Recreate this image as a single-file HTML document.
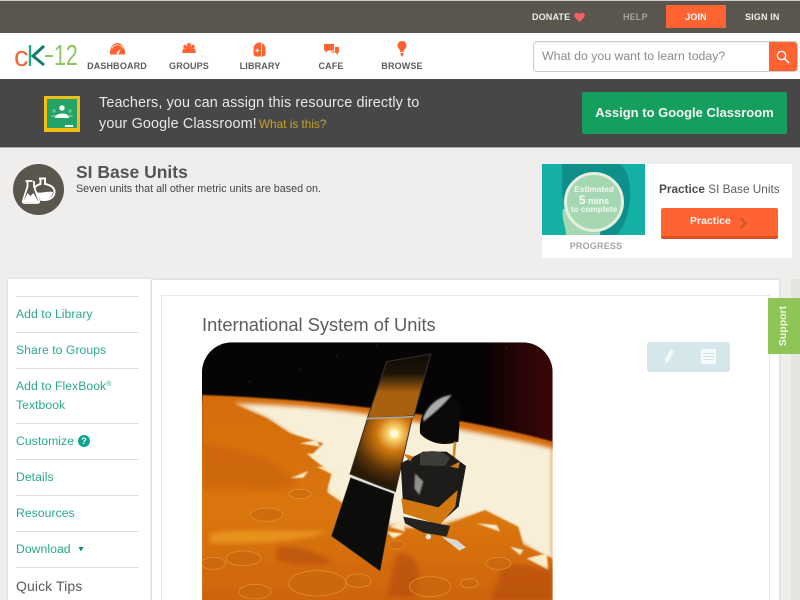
<!DOCTYPE html>
<html><head><meta charset="utf-8"><title>SI Base Units</title>
<style>
*{box-sizing:border-box}
html,body{margin:0;padding:0;width:800px;height:600px;overflow:hidden;background:#efeeec;font-family:"Liberation Sans",sans-serif}
#w{position:relative;width:800px;height:600px;overflow:hidden;background:#efeeec}
.a{position:absolute;white-space:nowrap}
.nav{font-size:9px;font-weight:700;color:#5b5b5b;letter-spacing:.15px;width:80px;text-align:center;top:61px}
.top{font-size:9px;font-weight:700;top:12px;letter-spacing:.15px}
.side{left:16px;font-size:12.200px;color:#2aa98f;letter-spacing:.05px}
.ln{left:16px;width:123px;height:1px;background:#dfdfdc}
</style></head><body><div id="w">
<div class="a" style="left:0;top:0;width:800px;height:33px;background:#5a564e;border-top:1px solid #ccc"></div>
<div class="a" style="left:0;top:33px;width:800px;height:46px;background:#fff"></div>
<div class="a" style="left:0;top:79px;width:800px;height:69px;background:#474747;border-bottom:1px solid #aaa"></div>

<div class="a top" style="left:532px;color:#eee">DONATE</div>
<svg class="a" style="left:574px;top:12px" width="11" height="10" viewBox="0 0 11 10"><path d="M5.5 10L1 5.500C-.5 3.500.5 .8 3 .8c1.200 0 2 .6 2.500 1.500C6 1.400 6.800.8 8 .8c2.500 0 3.500 2.700 2 4.700z" fill="#f0625f"/></svg>
<div class="a top" style="left:623px;color:#a5a29b">HELP</div>
<div class="a" style="left:666px;top:5px;width:60px;height:23px;background:#ff6332;border-radius:1px"></div>
<div class="a top" style="left:666px;width:60px;text-align:center;color:#fff">JOIN</div>
<div class="a top" style="left:745px;color:#eee">SIGN IN</div>

<div class="a" style="left:14px;top:39px;font-size:29px;line-height:36px;color:#ee6a3a">c</div>
<svg class="a" style="left:27px;top:44px" width="20" height="24" viewBox="0 0 20 24"><path d="M3 1v21" stroke="#26a98b" stroke-width="2.400" fill="none"/><path d="M17 2L6 12l11 9" stroke="#127d68" stroke-width="3" fill="none"/></svg>
<div class="a" style="left:45px;top:55px;width:8px;height:2px;background:#8cc665"></div>
<div class="a" style="left:54px;top:38px;font-size:29px;line-height:36px;color:#8cc665;transform:scaleX(.74);transform-origin:0 0">12</div>

<svg class="a" style="left:110px;top:43px" width="15" height="12" viewBox="0 0 15 12"><path d="M0 11.500C-.5 5 3 0 7.500 0S15.500 5 15 11.500z" fill="#ff6332"/><path d="M1.800 5.500C3 3 5 1.800 7.500 1.800S12 3 13.200 5.500" fill="none" stroke="#fff" stroke-width=".7"/><path d="M6 10.500L10.500 6 8.500 11z" fill="#fff"/></svg>
<div class="a nav" style="left:77px">DASHBOARD</div>
<svg class="a" style="left:182px;top:43px" width="14" height="11" viewBox="0 0 14 11" fill="#ff6332"><circle cx="3" cy="3.500" r="1.700"/><circle cx="7" cy="2" r="2"/><circle cx="11" cy="3.500" r="1.700"/><path d="M0 10l1.200-4.500h2L4 3.500h6l.8 2h2L14 10z"/></svg>
<div class="a nav" style="left:149px">GROUPS</div>
<svg class="a" style="left:253px;top:42px" width="13" height="15" viewBox="0 0 13 15"><path d="M.5 7C.5 3 3.500.5 6.500.5S12.500 3 12.500 7v5c0 1.500-1.500 2.500-3 2.500H3.500C2 14.500.5 13.500.5 12z" fill="#ff6332"/><path d="M8.500 1.500v12.500" stroke="#fff" stroke-width=".8"/><path d="M2.500 8.500h3.500M4.200 6.500v4" stroke="#fff"/></svg>
<div class="a nav" style="left:220px">LIBRARY</div>
<svg class="a" style="left:324px;top:44px" width="15" height="12" viewBox="0 0 15 12" fill="#ff6332"><path d="M0 0h10v6.500H4L1.500 9V6.500H0z"/><path d="M11 3h4v5.500h-1V11l-2.500-2.500H7V7.500h4z"/></svg>
<div class="a nav" style="left:291px">CAFE</div>
<svg class="a" style="left:397px;top:41px" width="10" height="16" viewBox="0 0 10 16" fill="#ff6332"><path d="M5 0c2.800 0 4.500 2 4.500 4.500C9.500 7 7 8 6.500 11h-3C3 8 .5 7 .5 4.500.5 2 2.200 0 5 0z"/><path d="M3.500 12h3v1.500l-1 2h-1l-1-2z"/></svg>
<div class="a nav" style="left:362px">BROWSE</div>

<div class="a" style="left:533px;top:41px;width:265px;height:31px;background:#fff;border:1px solid #cfccc4;border-radius:4px;box-shadow:inset 0 1px 2px #eee"></div>
<div class="a" style="left:542px;top:49px;font-size:12.300px;line-height:15px;color:#8b8b8b">What do you want to learn today?</div>
<div class="a" style="left:769px;top:42px;width:28px;height:29px;background:#ff6332;border-radius:0 3px 3px 0"></div>
<svg class="a" style="left:775px;top:50px" width="16" height="14" viewBox="0 0 16 14"><circle cx="6.500" cy="5.500" r="4.200" fill="none" stroke="#fff" stroke-width="1.300"/><path d="M9.500 8.500L14 13" stroke="#fff" stroke-width="1.600"/></svg>

<svg class="a" style="left:44px;top:96px" width="36" height="36" viewBox="0 0 36 36"><rect width="36" height="36" fill="#f4bc16"/><rect x="3" y="3" width="30" height="29" fill="#21a465"/><circle cx="18" cy="12" r="2.700" fill="#fff"/><circle cx="10" cy="15" r="1.700" fill="#6cc296"/><circle cx="26" cy="15" r="1.700" fill="#6cc296"/><path d="M7 21c0-3 6-3 6 0zM23 21c0-3 6-3 6 0z" fill="#6cc296"/><path d="M11 22c0-6 14-6 14 0z" fill="#fff"/><rect x="21" y="29" width="8" height="2" fill="#fff"/></svg>
<div class="a" style="left:99px;top:93px;font-size:14.400px;line-height:20.500px;color:#e8e8e8;letter-spacing:.12px">Teachers, you can assign this resource directly to<br>your Google Classroom! <span style="font-size:11.800px;color:#c9a227;letter-spacing:0;margin-left:-2px">What is this?</span></div>
<div class="a" style="left:582px;top:92px;width:205px;height:42px;background:#169e5e;border-radius:2px;color:#f3f3f3;font-weight:700;font-size:13px;line-height:42px;text-align:center">Assign to Google Classroom</div>

<div class="a" style="left:13px;top:164px;width:51px;height:51px;border-radius:50%;background:#5a564e"></div>
<svg class="a" style="left:22px;top:176px;overflow:visible" width="34" height="29" viewBox="0 0 34 29"><g transform="translate(3 2)"><path d="M14 .5h7M15.500 1v5C10 7.500 8 11 9 15c1 5 5 7 10 7 6 0 10-3 10.500-7.500C30 10 26 7 20 6V1" fill="none" stroke="#fff" stroke-width="2"/><path d="M11 14c5 2 9-1 17 0-1 5-4 7-9 7s-7-3-8-7z" fill="#fff"/></g><path d="M3 4h8v6l7 14c1 2 0 4-2 4H2c-2 0-2.500-2-1.500-4L6 10V5z" fill="#5a564e"/><path d="M3.500 5h7M5.500 5v5.500L1 24.500c-.5 1.500 0 2.500 1.500 2.500h13c1.500 0 2-1 1.500-2.500l-5-14V5" fill="none" stroke="#fff" stroke-width="1.800"/><path d="M1.500 26l4-9 3 3 3-3 5 9z" fill="#fff"/></svg>
<div class="a" style="left:76px;top:162px;font-size:17.500px;line-height:21px;font-weight:700;color:#545454">SI Base Units</div>
<div class="a" style="left:76px;top:182.500px;font-size:10.750px;line-height:13px;color:#454545">Seven units that all other metric units are based on.</div>

<div class="a" style="left:542px;top:164px;width:250px;height:94px;background:#fff"></div>
<svg class="a" style="left:542px;top:164px" width="103" height="71" viewBox="0 0 103 71"><rect width="103" height="71" fill="#14b0a5"/><path d="M20 0H78C92 10 92 50 75 71H30L20 30z" fill="#0e8f8c"/><path d="M24 71C24 62 19 55 21 45L60 50 58 71z" fill="#a5d8b2"/><circle cx="52" cy="38" r="28.500" fill="#a5d8b2" stroke="#e4efdf" stroke-width="3"/></svg>
<div class="a" style="left:564px;top:184px;width:60px;text-align:center;font-size:8.300px;line-height:10px;font-weight:700;color:#f2f7ef">Estimated</div>
<div class="a" style="left:564px;top:193.500px;width:60px;text-align:center;font-size:9px;line-height:12px;font-weight:700;color:#f7faf5"><span style="font-size:12px">5</span> mins</div>
<div class="a" style="left:564px;top:204px;width:60px;text-align:center;font-size:8.300px;line-height:11px;font-weight:700;color:#f2f7ef">to complete</div>
<div class="a" style="left:542px;top:241px;width:108px;text-align:center;font-size:9px;line-height:11px;font-weight:700;color:#a5a5a5;letter-spacing:.2px">PROGRESS</div>
<div class="a" style="left:659px;top:182px;font-size:11.800px;line-height:15px;color:#5c5c5c"><b style="color:#4c4c4c">Practice</b> SI Base Units</div>
<div class="a" style="left:661px;top:208px;width:117px;height:31px;background:#ff6332;border-bottom:3px solid #dd4e1f;border-radius:2px"></div>
<div class="a" style="left:690px;top:214px;font-size:10.500px;line-height:14px;font-weight:700;color:#fdf3ee">Practice</div>
<svg class="a" style="left:739px;top:217px" width="9" height="12" viewBox="0 0 9 12"><path d="M1.500 1L6.500 6 1.500 11" fill="none" stroke="#d35a2a" stroke-width="2.800"/></svg>

<div class="a" style="left:8px;top:279px;width:143px;height:330px;background:#fff;box-shadow:0 0 2px #ccc"></div>
<div class="a" style="left:152px;top:280px;width:627px;height:330px;background:#fff;box-shadow:0 0 3px #c8c8c8"></div>
<div class="a" style="left:161px;top:295px;width:609px;height:320px;background:#fff;border:1px solid #e7e7e5"></div>

<div class="a ln" style="top:296px"></div>
<div class="a side" style="top:307px">Add to Library</div>
<div class="a ln" style="top:332px"></div>
<div class="a side" style="top:343px">Share to Groups</div>
<div class="a ln" style="top:368px"></div>
<div class="a side" style="top:379px">Add to FlexBook<sup style="font-size:7px;line-height:0;vertical-align:4px">®</sup></div>
<div class="a side" style="top:398px">Textbook</div>
<div class="a ln" style="top:423px"></div>
<div class="a side" style="top:434px">Customize</div>
<div class="a" style="left:78px;top:435px;width:12px;height:12px;border-radius:50%;background:#0ea491;color:#fff;font-size:9px;line-height:12px;font-weight:700;text-align:center">?</div>
<div class="a ln" style="top:459px"></div>
<div class="a side" style="top:470px">Details</div>
<div class="a ln" style="top:495px"></div>
<div class="a side" style="top:506px">Resources</div>
<div class="a ln" style="top:531px"></div>
<div class="a side" style="top:542px">Download</div>
<svg class="a" style="left:78px;top:546px" width="6" height="6" viewBox="0 0 6 6"><path d="M.5 1h5L3 5.500z" fill="#158a78"/></svg>
<div class="a ln" style="top:567px"></div>
<div class="a" style="left:16px;top:578px;font-size:14px;color:#5a5a5a;letter-spacing:.1px">Quick Tips</div>

<div class="a" style="left:202px;top:314px;font-size:18.300px;line-height:22px;color:#5d5d5d">International System of Units</div>

<svg class="a" style="left:190px;top:310px" width="380" height="290" viewBox="0 0 1140 870">
<defs>
<clipPath id="c"><rect x="36" y="97" width="1052" height="900" rx="90"/></clipPath>
<filter id="b" x="-20%" y="-20%" width="140%" height="140%"><feGaussianBlur stdDeviation="7"/></filter>
<filter id="s" x="-10%" y="-10%" width="120%" height="120%"><feGaussianBlur stdDeviation="2"/></filter>
<radialGradient id="g" gradientUnits="userSpaceOnUse" cx="613" cy="371" r="150"><stop offset="0" stop-color="#fff"/><stop offset=".1" stop-color="#ffdf80"/><stop offset=".35" stop-color="#d0780e"/><stop offset=".75" stop-color="#5a3208"/><stop offset="1" stop-color="#2a1a08"/></radialGradient>
<linearGradient id="t" x1="0" x2="0" y1="0" y2="1"><stop offset="0" stop-color="#0f0b07"/><stop offset=".3" stop-color="#1c1208"/><stop offset=".6" stop-color="#a8620f"/><stop offset="1" stop-color="#a8620f"/></linearGradient>
<linearGradient id="sky" x1="0" x2="1" y1="0" y2="0"><stop offset="0" stop-color="#050507"/><stop offset=".8" stop-color="#060304"/><stop offset=".92" stop-color="#2a0505"/><stop offset="1" stop-color="#3a0606"/></linearGradient>
<linearGradient id="ter" x1="0" x2="0" y1="0" y2="1"><stop offset="0" stop-color="#d56d0d"/><stop offset=".55" stop-color="#da7510"/><stop offset="1" stop-color="#cc620c"/></linearGradient>
</defs>
<g clip-path="url(#c)">
<rect x="36" y="97" width="1052" height="320" fill="url(#sky)"/>
<g fill="#778" opacity=".7"><circle cx="180" cy="215" r="1.500"/><circle cx="330" cy="180" r="1.500"/><circle cx="560" cy="108" r="1.500"/><circle cx="870" cy="240" r="1.500"/><circle cx="950" cy="115" r="1.500"/><circle cx="440" cy="140" r="1.500"/></g>
<path d="M36 255C250 262 500 285 700 315C850 338 1000 370 1088 395V900H36z" fill="#d56d0d" filter="url(#s)"/>
<path d="M130 280C300 285 450 298 540 315C700 338 900 370 1088 415V760L980 690 880 610 700 660 560 640 420 560 340 400 230 325z" fill="#f8efd8" filter="url(#b)"/>
<path d="M36 282L130 282 230 325 300 370 400 400 360 440 425 490 410 545 470 590 600 660 760 650 885 600 985 650 1000 705 1088 745V900H36z" fill="url(#ter)" filter="url(#s)"/>
<g fill="#f9ecc8" filter="url(#s)"><path d="M300 505l55-22-15 20zM350 430l50 5-25 15zM380 470l70 5-20 20zM410 545l35-5 10 30zM600 650l40-15 5 30zM860 640l60 5 10 20zM960 710l40 10-10 15zM1010 745l60-15 5 50zM330 400l50-10 10 20zM590 665l50 5-30 15z"/></g>
<path d="M36 400C150 420 260 440 320 520 260 560 120 520 36 540z" fill="#c9620c" opacity=".6" filter="url(#b)"/>
<path d="M60 670C200 650 300 670 420 660 340 700 180 700 60 700z" fill="#f0a028" opacity=".7" filter="url(#b)"/>
<path d="M260 710C340 700 400 740 430 760 350 770 300 760 260 750zM620 730C680 720 700 790 680 860H590zM940 770C1000 750 1060 790 1088 770V870H900z" fill="#a8400a" opacity=".45" filter="url(#b)"/>
<g fill="#c9650f" fill-opacity=".6" stroke="#e9983a" stroke-opacity=".75" stroke-width="2.500"><ellipse cx="230" cy="614" rx="48" ry="20"/><ellipse cx="382" cy="820" rx="86" ry="38"/><ellipse cx="160" cy="745" rx="52" ry="22"/><ellipse cx="195" cy="845" rx="48" ry="22"/><ellipse cx="505" cy="812" rx="38" ry="20"/><ellipse cx="70" cy="760" rx="36" ry="18"/><ellipse cx="925" cy="760" rx="38" ry="18"/><ellipse cx="838" cy="820" rx="26" ry="14"/><ellipse cx="330" cy="552" rx="32" ry="14"/><ellipse cx="720" cy="830" rx="62" ry="30"/><ellipse cx="620" cy="705" rx="24" ry="13"/></g>
<path d="M590 155L722 132 672 318 532 325z" fill="url(#t)" stroke="#34322c" stroke-width="3"/>
<path d="M532 326L668 318 616 546 480 492z" fill="url(#g)" stroke="#34322c" stroke-width="3"/>
<circle cx="613" cy="371" r="12" fill="#fffbe0" filter="url(#s)"/>
<path d="M482 504L612 552 570 782 425 678z" fill="#0c0c0b" stroke="#2a2a26" stroke-width="2"/>
<path d="M482 500L616 548" stroke="#ddd" stroke-width="4"/>
<path d="M530 326L670 320" stroke="#a8a89c" stroke-width="5"/>
<path d="M775 250C720 255 685 310 690 370 715 400 765 410 805 395L812 280z" fill="#0b0a09"/>
<path d="M700 322C720 275 755 258 785 255 765 280 745 300 700 335z" fill="#a9acac" filter="url(#s)"/>
<path d="M795 395L790 460" stroke="#d08a20" stroke-width="8"/>
<path d="M632 460L700 425 770 425 828 468 806 590 745 645 640 600z" fill="#1d1c1a"/>
<path d="M690 432c30-15 70-10 90 12l-15 24-75-2z" fill="#3c3c38"/>
<path d="M675 490l25 25-12 40-15-20z" fill="#8f918d" filter="url(#s)"/>
<path d="M634 565L745 592 803 540 796 590 750 645 640 610z" fill="#d27610"/>
<path d="M640 620L780 648 770 680 700 668 645 640z" fill="#25231f"/>
<path d="M755 680L800 690 828 712 808 722z" fill="#d9d9d4"/>
<circle cx="715" cy="680" r="8" fill="#e8e8e0"/>
<path d="M640 430l30 10-10 15zM780 470l30-15-5 20z" fill="#d07a14"/>
</g>
</svg>

<div class="a" style="left:647px;top:342px;width:83px;height:30px;background:#d5e7ea;border-radius:3px"></div>
<svg class="a" style="left:662px;top:348px" width="14" height="18" viewBox="0 0 14 18"><path d="M9 1l3 2-5 10-4 3 0-5z" fill="#f2f8f8"/></svg>
<svg class="a" style="left:701px;top:349px" width="15" height="15" viewBox="0 0 15 15"><rect width="15" height="15" rx="1" fill="#f6fafa"/><path d="M2 4.500h11M2 7.500h11M2 10.500h11" stroke="#cfe0e3"/></svg>

<div class="a" style="left:791px;top:279px;width:9px;height:321px;background:#e5e4e1"></div>
<div class="a" style="left:768px;top:298px;width:32px;height:56px;background:#8fc556"></div>
<div class="a" style="left:755px;top:319px;width:56px;text-align:center;font-size:10.500px;line-height:14px;font-weight:700;color:#f2f8ea;transform:rotate(-90deg)">Support</div>
</div></body></html>
